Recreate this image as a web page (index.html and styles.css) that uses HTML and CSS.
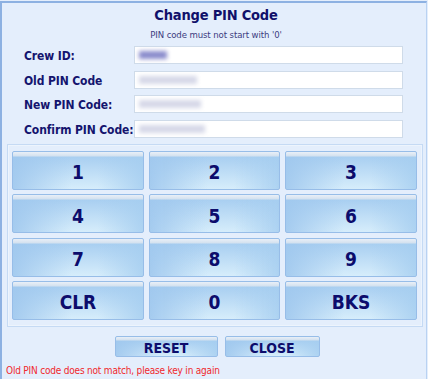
FILE: index.html
```html
<!DOCTYPE html>
<html>
<head>
<meta charset="utf-8">
<link rel="stylesheet" href="styles.css">
</head>
<body>
<div class="frame">
  <h1 class="title">Change PIN Code</h1>
  <p class="hint">PIN code must not start with '0'</p>
  <div class="form">
    <label class="label">Crew ID:</label>
    <div class="field"><span class="blur blur-dark" style="width:28px"></span></div>
    <label class="label">Old PIN Code</label>
    <div class="field"><span class="blur" style="width:58px"></span></div>
    <label class="label">New PIN Code:</label>
    <div class="field"><span class="blur" style="width:62px"></span></div>
    <label class="label">Confirm PIN Code:</label>
    <div class="field"><span class="blur" style="width:66px"></span></div>
  </div>
  <div class="keypad">
    <button class="key">1</button>
    <button class="key">2</button>
    <button class="key">3</button>
    <button class="key">4</button>
    <button class="key">5</button>
    <button class="key">6</button>
    <button class="key">7</button>
    <button class="key">8</button>
    <button class="key">9</button>
    <button class="key">CLR</button>
    <button class="key">0</button>
    <button class="key">BKS</button>
  </div>
  <div class="actions">
    <button class="key action reset">RESET</button>
    <button class="key action close">CLOSE</button>
  </div>
  <p class="error">Old PIN code does not match, please key in again</p>
</div>
</body>
</html>
```
FILE: styles.css
```css
html, body {
  margin: 0;
  padding: 0;
  background: #e4eefc;
}
body {
  width: 428px;
  height: 379px;
  overflow: hidden;
  font-family: "DejaVu Sans Condensed", "DejaVu Sans", sans-serif;
}
.frame {
  box-sizing: border-box;
  margin-top: 1px;
  width: 427px;
  height: 378px;
  border-left: 2px solid #8db1e2;
  border-top: 2px solid #8db1e2;
  border-right: 1px solid #b9d2f2;
  background: #e4eefc;
  display: flex;
  flex-direction: column;
  padding: 0 0 0 4px;
}
.title {
  margin: 3px 0 0 0;
  font-size: 14.5px;
  letter-spacing: -0.2px;
  line-height: 18px;
  font-weight: bold;
  color: #10106a;
  text-align: center;
}
.hint {
  margin: 5px 0 0 0;
  font-size: 9.5px;
  letter-spacing: -0.1px;
  line-height: 12px;
  color: #3c3c80;
  text-align: center;
}
.form {
  display: grid;
  grid-template-columns: 110px 269px;
  grid-auto-rows: 18px;
  row-gap: 6.6px;
  margin: 5px 0 0 18px;
  align-items: center;
}
.label {
  font-size: 12px;
  letter-spacing: -0.1px;
  font-weight: bold;
  color: #14146e;
  line-height: 18px;
  padding-top: 2px;
  white-space: nowrap;
}
.field {
  box-sizing: border-box;
  height: 18px;
  background: #ffffff;
  border: 1px solid #cfdbe9;
  display: flex;
  align-items: center;
  padding-left: 4px;
}
.blur {
  display: block;
  height: 8px;
  background: #d6d8e8;
  filter: blur(2px);
}
.blur-dark {
  background: #8a8ccc;
}
.keypad {
  box-sizing: border-box;
  margin: 6px 0 0 1px;
  width: 416px;
  height: 183px;
  border: 1px solid #c5daf4;
  box-shadow: inset 0 0 0 1px #edf4fd;
  padding: 6px 5px 5px 4px;
  display: grid;
  grid-template-columns: repeat(3, 1fr);
  grid-auto-rows: 39px;
  column-gap: 4.7px;
  row-gap: 4.4px;
}
.key {
  box-sizing: border-box;
  margin: 0;
  border: 1px solid #97bde8;
  border-radius: 2px;
  background:
    linear-gradient(to bottom, #e9eff7 0px, #d3e1ef 4px, rgba(255,255,255,0) 5px),
    linear-gradient(to right, rgba(160,200,238,0.9) 0%, rgba(210,236,251,0) 45%, rgba(210,236,251,0) 65%, rgba(166,206,240,0.85) 100%),
    linear-gradient(to bottom, #a9cff1 5px, #d6edfb 100%);
  font-family: "DejaVu Sans Condensed", "DejaVu Sans", sans-serif;
  font-weight: bold;
  font-size: 19px;
  color: #0c0c6c;
  padding: 4px 0 0 0;
  text-align: center;
}
.actions {
  display: flex;
  justify-content: center;
  gap: 7px;
  margin: 9px 0 0 2px;
}
.action {
  height: 21px;
  font-size: 14px;
  padding: 3px 0 0 0;
  line-height: 16px;
  background:
    linear-gradient(to bottom, #e9eff7 0px, #d3e1ef 3px, rgba(255,255,255,0) 4px),
    linear-gradient(to right, rgba(160,200,238,0.9) 0%, rgba(210,236,251,0) 45%, rgba(210,236,251,0) 65%, rgba(166,206,240,0.85) 100%),
    linear-gradient(to bottom, #a9cff1 4px, #d6edfb 100%);
}
.reset { width: 103px; }
.close { width: 95px; }
.error {
  margin: 7px 0 0 0;
  font-size: 10px;
  letter-spacing: -0.2px;
  line-height: 13px;
  color: #f0282c;
}
```
